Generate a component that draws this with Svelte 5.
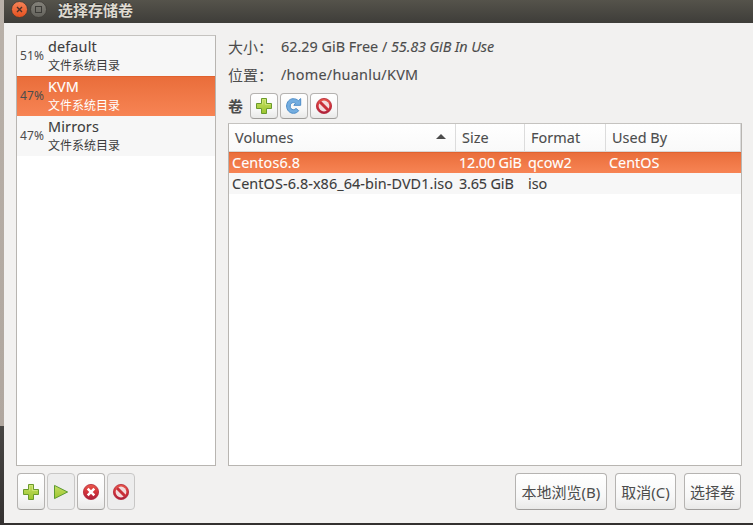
<script>
  const pools = [
    { name: 'default', usage: '51%' },
    { name: 'KVM', usage: '47%', selected: true },
    { name: 'Mirrors', usage: '47%' }
  ];
  const volumes = [
    { name: 'Centos6.8', size: '12.00 GiB', format: 'qcow2', usedBy: 'CentOS', selected: true },
    { name: 'CentOS-6.8-x86_64-bin-DVD1.iso', size: '3.65 GiB', format: 'iso', usedBy: '' }
  ];
</script>

{#snippet icon(kind)}
  <svg class="icon" width="18" height="18" viewBox="0 0 18 18">
    {#if kind === 'add'}
      <path d="M6.5 1.5h5v5h5v5h-5v5h-5v-5h-5v-5h5z" fill="url(#green)" stroke="#6a9a2c" />
      <path d="M7.5 7.5v-5h3v5h5" fill="none" stroke="#d5ea84" opacity=".7" />
    {:else if kind === 'play'}
      <path d="M2.5 2.4v13.2L15.6 9z" fill="url(#green)" stroke="#5c9a31" stroke-linejoin="round" />
    {:else if kind === 'refresh'}
      <path d="M8.2 1.7C4.6 1.7 1.6 5 1.6 9s3 7.3 6.8 7.3c2.2 0 4.1-.9 5.3-2.6l-2.7-2.3c-.6.8-1.5 1.3-2.6 1.3-1.9 0-3.2-1.6-3.2-3.6s1.3-3.5 3.1-3.5c.9 0 1.6.3 2.2.8L8.8 8.3h6.9V1.6l-2.3 2.1c-1.3-1.3-3.2-2-5.2-2z" fill="#73ade0" stroke="#4e8dc8" stroke-linejoin="round" />
    {:else}
      <circle cx="9" cy="9" r="7.6" fill="url(#red)" stroke="#b22335" stroke-width=".8" />
      {#if kind === 'stop'}
        <path d="M5.7 5.7l6.6 6.6M12.3 5.7l-6.6 6.6" stroke="#fff" stroke-width="2.5" />
      {:else}
        <circle cx="9" cy="9" r="5.4" fill="#f3dcdd" />
        <path d="M5 5l8 8" stroke="#c93039" stroke-width="3" />
      {/if}
    {/if}
  </svg>
{/snippet}

<div class="screen">
  <svg class="defs" width="0" height="0">
    <defs>
      <linearGradient id="green" x1="0" y1="0" x2="0" y2="1">
        <stop offset="0" stop-color="#c5df62" /><stop offset="1" stop-color="#9cc52f" />
      </linearGradient>
      <linearGradient id="red" x1="0" y1="0" x2="0" y2="1">
        <stop offset="0" stop-color="#e9594b" /><stop offset=".5" stop-color="#d3333a" /><stop offset="1" stop-color="#a91f3c" />
      </linearGradient>
    </defs>
  </svg>
  <div class="window">
    <header>
      <svg width="40" height="20" viewBox="0 0 40 20">
        <defs>
          <linearGradient id="close" x1="0" y1="0" x2="0" y2="1">
            <stop offset="0" stop-color="#f58458" /><stop offset="1" stop-color="#e5501f" />
          </linearGradient>
          <linearGradient id="max" x1="0" y1="0" x2="0" y2="1">
            <stop offset="0" stop-color="#85837b" /><stop offset="1" stop-color="#62615b" />
          </linearGradient>
        </defs>
        <circle cx="8.5" cy="9.5" r="8" fill="url(#close)" stroke="#3b3934" stroke-width=".8" />
        <path d="M6 7l5 5M11 7l-5 5" stroke="#4b3029" stroke-width="1.4" />
        <circle cx="27.5" cy="9.5" r="8" fill="url(#max)" stroke="#3b3934" stroke-width=".8" />
        <rect x="24.5" y="6.5" width="6" height="6" fill="none" stroke="#3c3b37" />
      </svg>
      <h1>选择存储卷</h1>
    </header>
    <main>
      <aside>
        {#each pools as pool}
          <div class="pool" class:selected={pool.selected}>
            <span class="usage">{pool.usage}</span>
            <div class="about">
              <span class="name">{pool.name}</span>
              <span class="kind">文件系统目录</span>
            </div>
          </div>
        {/each}
      </aside>
      <section>
        <div class="info"><span class="label">大小：</span><span class="free">62.29 GiB Free /&nbsp;</span><i class="used">55.83 GiB In Use</i></div>
        <div class="info"><span class="label">位置：</span><span class="path">/home/huanlu/KVM</span></div>
        <div class="tools">
          <b>卷</b>
          {#each ['add', 'refresh', 'delete'] as kind}
            <button aria-label={kind}>{@render icon(kind)}</button>
          {/each}
        </div>
        <div class="table">
          <div class="row head">
            <span>Volumes<i class="sort"></i></span><span>Size</span><span>Format</span><span>Used By</span>
          </div>
          {#each volumes as v}
            <div class="row" class:selected={v.selected}>
              <span class="volume">{v.name}</span><span class="size">{v.size}</span><span>{v.format}</span><span>{v.usedBy}</span>
            </div>
          {/each}
        </div>
      </section>
    </main>
    <footer>
      <div class="actions">
        <button aria-label="add">{@render icon('add')}</button>
        <button aria-label="start" class="off">{@render icon('play')}</button>
        <button aria-label="stop">{@render icon('stop')}</button>
        <button aria-label="delete" class="off">{@render icon('delete')}</button>
      </div>
      <div class="answers">
        <button class="browse">本地浏览(B)</button>
        <button class="cancel">取消(C)</button>
        <button class="choose">选择卷</button>
      </div>
    </footer>
  </div>
</div>

<style>
  .screen {
    box-sizing: border-box;
    width: 753px;
    height: 525px;
    padding: 0 0 2px 4px;
    overflow: hidden;
    background: linear-gradient(#b9b1a9 0, #b0a79f 426px, #484644 426px, #343130 100%);
    color: #4c4c4c;
    font: 14.4px/20px "Noto Sans", "Noto Sans CJK SC", sans-serif;
    white-space: nowrap;
  }
  .defs { position: absolute; }
  .window {
    display: flex;
    flex-direction: column;
    height: 523px;
    background: #f2f1f0;
    box-shadow: 0 2px #343130;
  }
  header {
    display: flex;
    height: 23px;
    flex: none;
    padding-left: 7px;
    background: linear-gradient(#55534b, #3e3d39);
  }
  h1 {
    margin: 0 0 0 7px;
    color: #dfdbd2;
    font-size: 15px;
    line-height: 21px;
    text-shadow: 0 -1px #302f2c;
  }
  main { display: flex; gap: 12px; padding: 12px 11px 0 12px; height: 431px; }
  aside, .table {
    box-sizing: border-box;
    border: 1px solid #b8b5b1;
    border-top-color: #c5c3c0;
    background: #fff;
  }
  aside { width: 200px; }
  .pool {
    display: flex;
    align-items: center;
    box-sizing: border-box;
    height: 40px;
    background: #f7f7f7;
  }
  .usage {
    box-sizing: border-box;
    width: 31px;
    padding-left: 3px;
    font-size: 12px;
    letter-spacing: .1px;
  }
  .about { display: flex; flex-direction: column; color: #3c3c3c; }
  .name { letter-spacing: .15px; -webkit-text-stroke: .1px; }
  .kind { font-size: 12px; line-height: 18px; }
  .row.selected, .pool.selected {
    background: linear-gradient(#e96d3a, #f78454);
    box-shadow: inset 0 1px #e1622e;
  }
  section { display: flex; flex-direction: column; width: 514px; }
  .info { display: flex; height: 28px; line-height: 24px; }
  .label { width: 53px; font-size: 15px; }
  .free, .used, .path { -webkit-text-stroke: .1px; }
  .used { letter-spacing: -.12px; }
  .path { letter-spacing: .26px; }
  .tools { display: flex; height: 32px; padding-top: 2px; box-sizing: border-box; gap: 2px; }
  .tools b { width: 20px; font-size: 15px; line-height: 26px; }
  button {
    display: flex;
    align-items: center;
    justify-content: center;
    box-sizing: border-box;
    width: 28px;
    height: 37px;
    padding: 0;
    border: 1px solid #b5b3b1;
    border-bottom-color: #9f9d9b;
    border-radius: 4px;
    background: linear-gradient(#fff, #f7f7f7 65%, #e9e9e8);
    color: #4c4c4c;
    font: inherit;
    font-size: 15px;
  }
  .tools button { height: 26px; }
  button.off { border-color: #c8c7c6; background: #ededed; }
  .icon { display: block; flex: none; }
  .table { flex: 1; }
  .row {
    display: grid;
    grid-template-columns: 227px 69px 81px 135px;
    height: 21px;
    line-height: 22px;
    background: #f7f7f7;
    color: #3c3c3c;
    -webkit-text-stroke: .1px;
  }
  .row span { padding-left: 3px; }
  .volume { letter-spacing: .08px; }
  .size { letter-spacing: -.15px; }
  .selected .about, .row.selected { color: #fff; }
  .row.head { height: 28px; color: #4c4c4c; background: linear-gradient(#fff, #f9f9f9); }
  .head span {
    display: flex;
    align-items: center;
    justify-content: space-between;
    padding-left: 6px;
    border-right: 1px solid #dcdcdc;
    border-bottom: 1px solid #d9d7d5;
    letter-spacing: .05px;
  }
  .sort {
    width: 0;
    margin: -3px 9px 0 0;
    border: 5px solid transparent;
    border-top: 0;
    border-bottom-color: #4c4c4c;
  }
  footer { display: flex; justify-content: space-between; padding: 7px 12px 0 13px; }
  .actions { display: flex; gap: 2px; }
  .answers { display: flex; gap: 8px; }
  .browse { width: 92px; }
  .cancel { width: 61px; }
  .choose { width: 57px; }
</style>
